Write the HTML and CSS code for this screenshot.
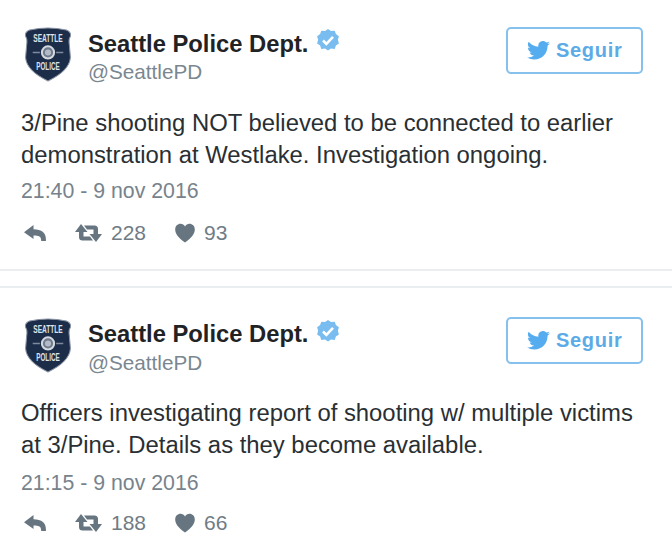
FILE: index.html
```html
<!DOCTYPE html>
<html lang="es">
<head>
<meta charset="utf-8">
<title>Seattle Police Dept.</title>
<link rel="stylesheet" href="styles.css">
</head>
<body>
<svg class="defs" width="0" height="0" aria-hidden="true">
  <defs>
    <symbol id="badge" viewBox="0 0 46 54">
      <path d="M5 3 Q23 -1 41 3 Q46 5 45 9 Q43 12 44 18 L45 30 Q44 43 23 53 Q2 43 1 30 L2 18 Q3 12 1 9 Q0 5 5 3Z" fill="#1c2d4a" stroke="#8b93a3" stroke-width="1"/>
      <text x="23" y="14.500" class="badge-text" textLength="29" lengthAdjust="spacingAndGlyphs">SEATTLE</text>
      <text x="23" y="42" class="badge-text" textLength="23" lengthAdjust="spacingAndGlyphs">POLICE</text>
      <path d="M8 25h7M31 25h7" stroke="#7f8a9c" stroke-width="1.500"/>
      <circle cx="23" cy="25" r="6" fill="#6d7a8c" stroke="#d5d9df" stroke-width="2"/>
      <circle cx="23" cy="25" r="3" fill="#b4bbc6"/>
    </symbol>
    <symbol id="verified" viewBox="0 0 24 24">
      <path d="M12 1l3 2 3.700-.3 1.200 3.400 3 2.100-1 3.600 1 3.600-3 2.100-1.200 3.400-3.700-.3-3 2-3-2-3.700.3-1.200-3.400-3-2.100 1-3.600-1-3.600 3-2.100 1.200-3.400 3.700.3z" fill="#79bdf0"/>
      <path d="M7 12.500l3.400 3.400 6.600-7" fill="none" stroke="#fff" stroke-width="2.600"/>
    </symbol>
    <symbol id="bird" viewBox="0 0 24 20">
      <path d="M24 2.400a9.800 9.800 0 0 1-2.800.8 4.900 4.900 0 0 0 2.200-2.700 9.800 9.800 0 0 1-3.100 1.200A4.900 4.900 0 0 0 11.900 6.100 14 14 0 0 1 1.700 .9a4.900 4.900 0 0 0 1.500 6.600 4.900 4.900 0 0 1-2.200-.6v.1a4.900 4.900 0 0 0 3.900 4.800 4.900 4.900 0 0 1-2.200.1 4.900 4.900 0 0 0 4.600 3.400A9.900 9.900 0 0 1 0 17.300 14 14 0 0 0 7.500 19.500c9.100 0 14-7.500 14-14v-.6A10 10 0 0 0 24 2.400z" fill="#55acee"/>
    </symbol>
    <symbol id="reply" viewBox="0 0 22 16">
      <path d="M9.500 0 L0 7.300 L9.500 14 V10.500 Q14.500 10 16.200 12 Q17.200 13.500 17.200 16 H21.900 Q22.300 10 19 7 Q15.500 4.300 9.500 4.300Z" fill="#66757f"/>
    </symbol>
    <symbol id="retweet" viewBox="0 0 27 18">
      <path d="M6 0 L12.500 8 H8.500 V12.500 H15 L18 16.500 H7.500 Q4 16.500 4 13 V8 H0 Z" fill="#66757f"/>
      <path d="M21 18 L14.500 10 H18.500 V5.500 H12 L9 1.500 H19.500 Q23 1.500 23 5 V10 H27 Z" fill="#66757f"/>
    </symbol>
    <symbol id="heart" viewBox="0 0 20 20">
      <path d="M10 19.500 C3 14.500 .2 10.500 .2 6.500 C.2 3 2.700 .8 5.500 .8 C7.500 .8 9 1.800 10 3.500 C11 1.800 12.500 .8 14.500 .8 C17.300 .8 19.800 3 19.800 6.500 C19.800 10.500 17 14.500 10 19.500Z" fill="#66757f"/>
    </symbol>
  </defs>
</svg>

<article class="tweet tweet-first">
  <header class="head">
    <svg class="avatar"><use href="#badge"/></svg>
    <div class="who">
      <div class="name-row"><span class="name">Seattle Police Dept.</span><svg class="check"><use href="#verified"/></svg></div>
      <div class="handle">@SeattlePD</div>
    </div>
    <button class="follow"><svg class="bird"><use href="#bird"/></svg>Seguir</button>
  </header>
  <p class="body">3/Pine shooting NOT believed to be connected to earlier demonstration at Westlake. Investigation ongoing.</p>
  <div class="time">21:40 - 9 nov 2016</div>
  <div class="actions">
    <svg class="i-reply"><use href="#reply"/></svg>
    <svg class="i-rt"><use href="#retweet"/></svg><span class="count">228</span>
    <svg class="i-heart"><use href="#heart"/></svg><span class="count">93</span>
  </div>
</article>

<article class="tweet tweet-second">
  <header class="head">
    <svg class="avatar"><use href="#badge"/></svg>
    <div class="who">
      <div class="name-row"><span class="name">Seattle Police Dept.</span><svg class="check"><use href="#verified"/></svg></div>
      <div class="handle">@SeattlePD</div>
    </div>
    <button class="follow"><svg class="bird"><use href="#bird"/></svg>Seguir</button>
  </header>
  <p class="body">Officers investigating report of shooting w/ multiple victims at 3/Pine. Details as they become available.</p>
  <div class="time">21:15 - 9 nov 2016</div>
  <div class="actions">
    <svg class="i-reply"><use href="#reply"/></svg>
    <svg class="i-rt"><use href="#retweet"/></svg><span class="count">188</span>
    <svg class="i-heart"><use href="#heart"/></svg><span class="count">66</span>
  </div>
</article>
</body>
</html>
```

FILE: styles.css
```css
* { box-sizing: border-box; }
html, body { margin: 0; padding: 0; }
body {
  width: 672px;
  height: 560px;
  overflow: hidden;
  background: #fff;
  font-family: "Liberation Sans", Arial, sans-serif;
  color: #292f33;
}
.defs { position: absolute; }
.badge-text {
  font: bold 11px "Liberation Sans", Arial, sans-serif;
  fill: #dfe3e9;
  text-anchor: middle;
}
.tweet { padding: 0 29px 0 21px; }
.tweet-first { height: 271px; margin-bottom: 15px; border-bottom: 2px solid #ebeef0; }
.tweet-second { height: 274px; border-top: 2px solid #ebeef0; }
.head { display: flex; align-items: flex-start; height: 107px; padding-top: 26px; }
.tweet-second .head { height: 109px; padding-top: 29px; }
.avatar { width: 48px; height: 55px; margin: 1px 0 0 3px; flex: none; }
.who { margin-left: 16px; flex: 1; }
.name-row { display: flex; align-items: flex-start; height: 34px; }
.name { font-size: 23.75px; font-weight: bold; line-height: 34px; color: #1f2326; }
.check { width: 24px; height: 24px; margin: 2px 0 0 8px; }
.tweet-first .name { position: relative; top: 1px; }
.handle { font-size: 20.7px; line-height: 24px; color: #7a8790; }
.follow {
  display: flex;
  align-items: center;
  width: 137px;
  height: 47px;
  margin-top: 1px;
  padding: 0 0 0 19px;
  background: #fff;
  border: 2px solid #86c0ec;
  border-radius: 5px;
  color: #5cabe6;
  font: bold 20px "Liberation Sans", Arial, sans-serif;
  letter-spacing: .7px;
}
.tweet-second .follow { margin-top: 0; }
.bird { width: 23px; height: 19px; margin-right: 6px; flex: none; }
.body { margin: 0; font-size: 23.85px; line-height: 32px; color: #292f33; width: 620px; }
.time { margin-top: 8px; font-size: 21.3px; line-height: 24px; color: #77838c; }
.tweet-second .time { margin-top: 10px; }
.actions { display: flex; align-items: center; height: 24px; margin-top: 18px; color: #6f7c85; }
.tweet-second .actions { margin-top: 16px; }
.i-reply { width: 22px; height: 16px; margin-left: 3px; flex: none; }
.i-rt { width: 27px; height: 18px; margin-left: 29px; flex: none; }
.i-heart { width: 20px; height: 20px; margin-left: 29px; flex: none; }
.count { font-size: 21px; line-height: 24px; margin-left: 9px; }
```
